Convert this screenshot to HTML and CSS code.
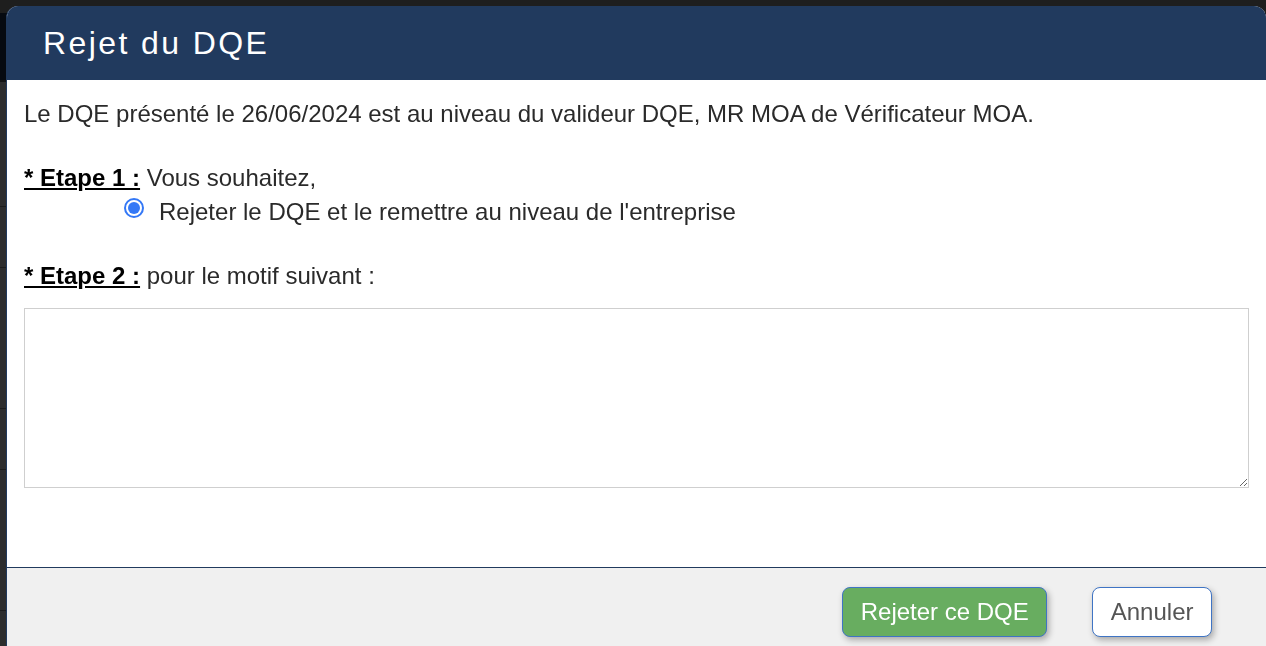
FILE: index.html
```html
<!DOCTYPE html>
<html lang="fr">
<head>
    <meta charset="UTF-8">
    <meta name="viewport" content="width=device-width, initial-scale=1.0">
    <title>Rejet du DQE</title>
    <link rel="stylesheet" href="styles.css">
</head>
<body>

    <!-- page derrière le voile -->
    <div class="page">
        <div class="page-top"></div>
        <div class="page-nav"></div>
        <div class="page-row tall"></div>
        <div class="page-row"></div>
        <div class="page-row big"></div>
        <div class="page-row"></div>
        <div class="page-row big"></div>
    </div>

    <div class="modal">
        <div class="modal-header">
            <h1>Rejet du DQE</h1>
        </div>

        <div class="modal-body">
            <p class="intro">Le DQE présenté le 26/06/2024 est au niveau du valideur DQE, MR MOA de Vérificateur MOA.</p>

            <p class="etape"><span class="etape-label">* Etape 1 :</span> Vous souhaitez,</p>
            <label class="choix">
                <span class="radio"></span>
                Rejeter le DQE et le remettre au niveau de l'entreprise
            </label>

            <p class="etape etape-2"><span class="etape-label">* Etape 2 :</span> pour le motif suivant :</p>
            <textarea class="motif"></textarea>
        </div>

        <div class="modal-footer">
            <button class="btn btn-rejeter">Rejeter ce DQE</button>
            <button class="btn btn-annuler">Annuler</button>
        </div>
    </div>

</body>
</html>
```

FILE: styles.css
```css
body {
    font-family: 'Liberation Sans', Arial, Helvetica, sans-serif;
    background-color: #2d2d2d;
    margin: 0;
    padding: 0;
    overflow: hidden;
}

.page-top {
    height: 13px;
    background-color: #1e1e1e;
}

.page-nav {
    height: 67px;
    background-color: #060a11;
    border-bottom: 2px solid #141414;
}

.page-row {
    height: 60px;
    border-bottom: 1px solid #1c1c1c;
}

.page-row.tall {
    height: 124px;
}

.page-row.big {
    height: 140px;
}

/* fenêtre modale */
.modal {
    position: fixed;
    top: 6px;
    left: 6px;
    right: 0;
    bottom: -40px;
    background-color: white;
    border-left: 1px solid #213a5e;
    border-radius: 12px 12px 0 0;
    overflow: hidden;
    display: flex;
    flex-direction: column;
}

.modal-header {
    background-color: #213a5e;
    height: 74px;
    flex-shrink: 0;
    display: flex;
    align-items: center;
    padding-left: 36px;
}

.modal-header h1 {
    margin: 0;
    color: white;
    font-weight: normal;
    font-size: 32px;
    letter-spacing: 2.4px;
}

.modal-body {
    padding: 20px 17px 0 17px;
    height: 487px;
    flex-shrink: 0;
    box-sizing: border-box;
    color: #2a2a2a;
    font-size: 24px;
    line-height: 27px;
}

.modal-body p {
    margin: 0;
}

.intro {
    margin-bottom: 37px !important;
}

.etape-label {
    color: black;
    font-weight: bold;
    text-decoration: underline;
}

.etape-2 {
    margin-top: 37px !important;
}

.choix {
    display: flex;
    align-items: flex-start;
    margin-top: 7px;
    padding-left: 100px;
}

.radio {
    width: 16px;
    height: 16px;
    border: 2px solid #3478f6;
    border-radius: 50%;
    margin-right: 15px;
    position: relative;
    flex-shrink: 0;
}

.radio::after {
    content: "";
    position: absolute;
    top: 2px;
    left: 2px;
    width: 12px;
    height: 12px;
    border-radius: 50%;
    background-color: #3478f6;
}

.motif {
    display: block;
    width: 100%;
    height: 180px;
    margin-top: 19px;
    box-sizing: border-box;
    border: 1px solid #cfcfcf;
    font-family: inherit;
    font-size: 16px;
}

.modal-footer {
    flex: 1;
    background-color: #f0f0f0;
    border-top: 1px solid #213a5e;
    display: flex;
    justify-content: flex-end;
    align-items: flex-start;
    gap: 45px;
    padding: 19px 54px 0 0;
}

.btn {
    font-family: inherit;
    font-size: 24px;
    height: 50px;
    padding: 0 17.5px;
    border: 1px solid #3f74c4;
    border-radius: 8px;
    box-shadow: 2px 3px 6px rgba(0, 0, 0, 0.3);
    cursor: pointer;
}

.btn-rejeter {
    background-color: #68ad60;
    color: white;
}

.btn-annuler {
    background-color: white;
    color: #555;
}
```
